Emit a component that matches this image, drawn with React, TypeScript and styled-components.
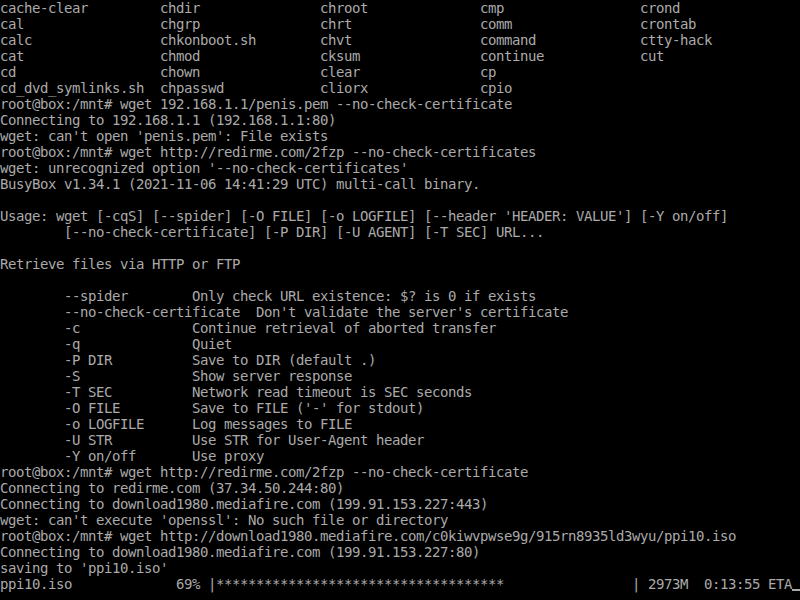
import React from "react";
import styled, { createGlobalStyle } from "styled-components";

const Global = createGlobalStyle`
  html, body {
    margin: 0;
    padding: 0;
    background: #000;
  }
  #root {
    min-height: 600px;
    background: #000;
  }
`;

const Screen = styled.div`
  width: 800px;
  height: 600px;
  overflow: hidden;
  background: #000;
  color: #aaaaaa;
  font-family: "DejaVu Sans Mono", "Liberation Mono", monospace;
  font-size: 14px;
  letter-spacing: -0.4287px;
  display: flex;
  flex-direction: column;
`;

const Line = styled.div`
  height: 16px;
  line-height: 16px;
  white-space: pre;
  display: flex;
  align-items: flex-start;
`;

const Cell = styled.span`
  white-space: pre;
`;

const Cursor = styled.span`
  display: inline-block;
  width: 8px;
  height: 16px;
  position: relative;
  &::after {
    content: "";
    position: absolute;
    left: 0;
    right: 0;
    top: 13px;
    height: 2px;
    background: #aaaaaa;
  }
`;

const listing: string[][] = [
  ["cache-clear", "chdir", "chroot", "cmp", "crond"],
  ["cal", "chgrp", "chrt", "comm", "crontab"],
  ["calc", "chkonboot.sh", "chvt", "command", "ctty-hack"],
  ["cat", "chmod", "cksum", "continue", "cut"],
  ["cd", "chown", "clear", "cp", ""],
  ["cd_dvd_symlinks.sh", "chpasswd", "cliorx", "cpio", ""],
];

const opt = (flag: string, desc: string) =>
  "        " + flag.padEnd(16, " ") + desc;

const lines: string[] = [
  "root@box:/mnt# wget 192.168.1.1/penis.pem --no-check-certificate",
  "Connecting to 192.168.1.1 (192.168.1.1:80)",
  "wget: can't open 'penis.pem': File exists",
  "root@box:/mnt# wget http://redirme.com/2fzp --no-check-certificates",
  "wget: unrecognized option '--no-check-certificates'",
  "BusyBox v1.34.1 (2021-11-06 14:41:29 UTC) multi-call binary.",
  "",
  "Usage: wget [-cqS] [--spider] [-O FILE] [-o LOGFILE] [--header 'HEADER: VALUE'] [-Y on/off]",
  "        [--no-check-certificate] [-P DIR] [-U AGENT] [-T SEC] URL...",
  "",
  "Retrieve files via HTTP or FTP",
  "",
  opt("--spider", "Only check URL existence: $? is 0 if exists"),
  "        --no-check-certificate  Don't validate the server's certificate",
  opt("-c", "Continue retrieval of aborted transfer"),
  opt("-q", "Quiet"),
  opt("-P DIR", "Save to DIR (default .)"),
  opt("-S", "Show server response"),
  opt("-T SEC", "Network read timeout is SEC seconds"),
  opt("-O FILE", "Save to FILE ('-' for stdout)"),
  opt("-o LOGFILE", "Log messages to FILE"),
  opt("-U STR", "Use STR for User-Agent header"),
  opt("-Y on/off", "Use proxy"),
  "root@box:/mnt# wget http://redirme.com/2fzp --no-check-certificate",
  "Connecting to redirme.com (37.34.50.244:80)",
  "Connecting to download1980.mediafire.com (199.91.153.227:443)",
  "wget: can't execute 'openssl': No such file or directory",
  "root@box:/mnt# wget http://download1980.mediafire.com/c0kiwvpwse9g/915rn8935ld3wyu/ppi10.iso",
  "Connecting to download1980.mediafire.com (199.91.153.227:80)",
  "saving to 'ppi10.iso'",
];

const barWidth = 52;
const stars = 36;
const progress =
  "ppi10.iso".padEnd(20, " ") +
  "  69% |" +
  "*".repeat(stars) +
  " ".repeat(barWidth - stars) +
  "| 2973M  0:13:55 ETA";

export default function App() {
  return (
    <>
      <Global />
      <Screen>
        {listing.map((row, i) => (
          <Line key={"l" + i}>
            {row.map((c, j) => (
              <Cell key={j}>{j < row.length - 1 ? c.padEnd(20, " ") : c}</Cell>
            ))}
          </Line>
        ))}
        {lines.map((t, i) => (
          <Line key={"t" + i}>{t}</Line>
        ))}
        <Line>
          <Cell>{progress}</Cell>
          <Cursor />
        </Line>
      </Screen>
    </>
  );
}
